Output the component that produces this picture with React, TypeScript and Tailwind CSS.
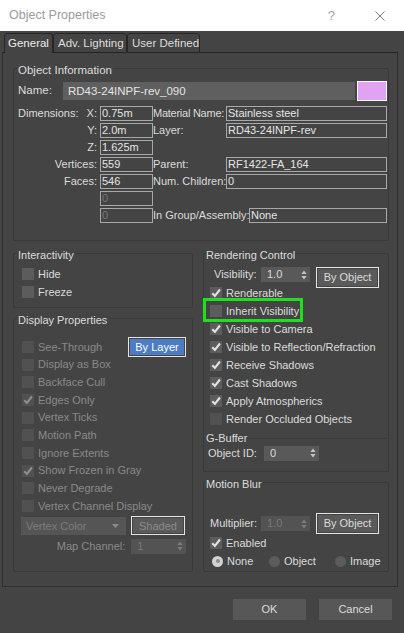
import React from 'react';

/* ── Small controls ─────────────────────────────── */

function Tick({ disabled }: { disabled?: boolean }) {
  return (
    <svg viewBox="0 0 12 12" className="w-[12px] h-[12px]">
      <path
        d="M2.3 6.2 L4.9 8.9 L9.9 2.5"
        fill="none"
        strokeWidth="2.1"
        className={disabled ? 'stroke-[#8e8e8e]' : 'stroke-[#e2e2e2]'}
      />
    </svg>
  );
}

function Check({
  label,
  checked,
  disabled,
  dark,
}: {
  label: string;
  checked?: boolean;
  disabled?: boolean;
  dark?: boolean;
}) {
  return (
    <div className="h-[18px] flex items-center gap-[4px]">
      <span
        className={`w-[12px] h-[12px] shrink-0 flex items-center justify-center ${
          disabled || dark ? 'bg-[#515151]' : 'bg-[#5c5c5c]'
        }`}
      >
        {checked && <Tick disabled={disabled} />}
      </span>
      <span className={disabled ? 'text-[#8a8a8a]' : 'text-[#dcdcdc]'}>{label}</span>
    </div>
  );
}

function Radio({ label, selected }: { label: string; selected?: boolean }) {
  return (
    <div className="h-[18px] flex items-center gap-[4px]">
      <span
        className={`w-[11px] h-[11px] ml-[2px] rounded-full flex items-center justify-center ${
          selected ? 'bg-[#d2d2d2]' : 'bg-[#5c5c5c]'
        }`}
      >
        {selected && <span className="w-[4px] h-[4px] rounded-full bg-[#8f8f8f]" />}
      </span>
      <span>{label}</span>
    </div>
  );
}

function Box({
  value,
  disabled,
  className = '',
}: {
  value: string;
  disabled?: boolean;
  className?: string;
}) {
  return (
    <div
      className={`h-[15px] border border-[#a8a8a8] pl-[1px] leading-[13px] overflow-hidden ${
        disabled ? 'text-[#767676]' : 'text-[#e4e4e4]'
      } ${className}`}
    >
      {value}
    </div>
  );
}

function Spinner({
  value,
  disabled,
  className = '',
}: {
  value: string;
  disabled?: boolean;
  className?: string;
}) {
  return (
    <div
      className={`h-[15px] flex items-center pl-[6px] pr-[3px] leading-[15px] ${
        disabled ? 'bg-[#535353] text-[#7a7a7a]' : 'bg-[#595959] text-[#dcdcdc]'
      } ${className}`}
    >
      <span className="flex-1">{value}</span>
      <svg viewBox="0 0 6 10" className="w-[6px] h-[10px]">
        <path
          d="M3 0.6 L5.6 4 H0.4 Z M3 9.4 L5.6 6 H0.4 Z"
          className={disabled ? 'fill-[#7e7e7e]' : 'fill-[#c4c4c4]'}
        />
      </svg>
    </div>
  );
}

function Button({
  label,
  blue,
  disabled,
  className = '',
}: {
  label: string;
  blue?: boolean;
  disabled?: boolean;
  className?: string;
}) {
  return (
    <div className={`border border-[#e4e4e4] p-[1px] shrink-0 ${className}`}>
      <div
        className={`h-full flex items-center justify-center ${
          blue ? 'bg-[#4b7cc4] text-white' : 'bg-[#5a5a5a]'
        } ${disabled ? 'text-[#8a8a8a]' : blue ? '' : 'text-[#dcdcdc]'}`}
      >
        {label}
      </div>
    </div>
  );
}

function Group({
  title,
  className = '',
  children,
}: {
  title: string;
  className?: string;
  children: React.ReactNode;
}) {
  return (
    <fieldset className={`border border-[#393939] rounded-[2px] min-w-0 ${className}`}>
      <legend className="leading-[14px] px-[1px] -ml-[1px] text-[#dcdcdc]">
        <span className="relative top-[2px]">{title}</span>
      </legend>
      {children}
    </fieldset>
  );
}

/* ── Dialog ─────────────────────────────────────── */

export default function App() {
  return (
    <div className="w-[404px] h-[633px] bg-[#444444] flex flex-col overflow-hidden whitespace-nowrap font-['Liberation_Sans','Arial',sans-serif] text-[11px] text-[#dcdcdc]">
      {/* ── Title bar ──────────────────────────── */}
      <div className="h-[31px] shrink-0 bg-white flex items-center pl-[9px] pr-[19px]">
        <span className="flex-1 text-[12.5px] text-[#9b9b9b]">Object Properties</span>
        <span className="text-[13px] text-[#a3a3a3] mr-[40px]">?</span>
        <svg viewBox="0 0 10 10" className="w-[10px] h-[10px]">
          <path d="M0.5 0.5 L9.5 9.5 M9.5 0.5 L0.5 9.5" stroke="#7c7c7c" strokeWidth="1" />
        </svg>
      </div>

      {/* ── Tabs ───────────────────────────────── */}
      <div className="ml-[2px] w-[396px] mt-[2px] h-[20px] flex items-stretch text-[11.5px]">
        <div className="w-[2px] border-b border-[#262626]" />
        <div className="w-[49px] border-x border-t border-[#262626] rounded-t-[3px] pl-[3px] leading-[19px] text-[#ececec]">
          General
        </div>
        <div className="w-[74px] border-x border-t border-b border-[#262626] rounded-t-[3px] pl-[4px] leading-[18px]">
          Adv. Lighting
        </div>
        <div className="w-[73px] border-x border-t border-b border-[#262626] rounded-t-[3px] pl-[4px] leading-[18px]">
          User Defined
        </div>
        <div className="flex-1 border-b border-[#262626]" />
      </div>

      {/* ── Tab page ───────────────────────────── */}
      <div className="ml-[2px] w-[396px] h-[534px] border-x border-b border-[#2f2f2f] pl-[10px] pt-[8px]">
        {/* Object Information */}
        <Group title="Object Information" className="w-[376px] pl-[4px] pr-[1px] pb-[17px] text-[11.5px]">
          <div className="mt-[6px] h-[20px] flex items-center">
            <span className="w-[45px]">Name:</span>
            <div className="w-[292px] h-[18px] bg-[#5f5f5f] pl-[5px] leading-[18px] text-[#e4e4e4]">
              RD43-24INPF-rev_090
            </div>
            <div className="ml-[2px] w-[30px] h-[20px] border border-white bg-[#e1a2f1]" />
          </div>

          <div className="mt-[5px] flex flex-col gap-[2px] leading-[15px] text-[11px]">
            <div className="h-[15px] flex">
              <div className="w-[82px] pr-[3px] flex justify-between">
                <span>Dimensions:</span>
                <span>X:</span>
              </div>
              <Box value="0.75m" className="w-[53px]" />
              <span className="w-[73px] tracking-[-0.25px]">Material Name:</span>
              <Box value="Stainless steel" className="flex-1" />
            </div>
            <div className="h-[15px] flex">
              <span className="w-[82px] pr-[3px] text-right">Y:</span>
              <Box value="2.0m" className="w-[53px]" />
              <span className="w-[73px]">Layer:</span>
              <Box value="RD43-24INPF-rev" className="flex-1" />
            </div>
            <div className="h-[15px] flex">
              <span className="w-[82px] pr-[3px] text-right">Z:</span>
              <Box value="1.625m" className="w-[53px]" />
            </div>
            <div className="h-[15px] flex">
              <span className="w-[82px] pr-[3px] text-right">Vertices:</span>
              <Box value="559" className="w-[53px]" />
              <span className="w-[73px]">Parent:</span>
              <Box value="RF1422-FA_164" className="flex-1" />
            </div>
            <div className="h-[15px] flex">
              <span className="w-[82px] pr-[3px] text-right">Faces:</span>
              <Box value="546" className="w-[53px]" />
              <span className="w-[73px]">Num. Children:</span>
              <Box value="0" className="flex-1" />
            </div>
            <div className="h-[15px] flex">
              <span className="w-[82px]" />
              <Box value="0" disabled className="w-[53px]" />
            </div>
            <div className="h-[15px] flex">
              <span className="w-[82px]" />
              <Box value="0" disabled className="w-[53px]" />
              <span className="w-[96px]">In Group/Assembly:</span>
              <Box value="None" className="flex-1" />
            </div>
          </div>
        </Group>

        {/* Two columns */}
        <div className="mt-[5px] flex gap-[10px]">
          {/* Left column */}
          <div className="w-[180px] flex flex-col">
            <Group title="Interactivity" className="pl-[4px] pb-[6px]">
              <div className="mt-[5px] pl-[4px]">
                <Check label="Hide" />
                <Check label="Freeze" />
              </div>
            </Group>

            <Group title="Display Properties" className="mt-[3px] pl-[4px] pr-[6px] pb-[17px]">
              <div className="mt-[13px] pl-[4px]">
                <div className="h-[17.7px] flex items-center">
                  <Check label="See-Through" disabled />
                  <Button label="By Layer" blue className="ml-auto w-[58px] h-[20px]" />
                </div>
                {[
                  ['Display as Box', false],
                  ['Backface Cull', false],
                  ['Edges Only', true],
                  ['Vertex Ticks', false],
                  ['Motion Path', false],
                  ['Ignore Extents', false],
                  ['Show Frozen in Gray', true],
                  ['Never Degrade', false],
                  ['Vertex Channel Display', false],
                ].map(([label, checked]) => (
                  <div key={label as string} className="h-[17.7px] flex items-center">
                    <Check label={label as string} checked={checked as boolean} disabled />
                  </div>
                ))}
                <div className="mt-[1px] h-[20px] flex items-center -ml-[1px]">
                  <div className="w-[105px] h-[18px] bg-[#555555] flex items-center pl-[5px] pr-[7px] text-[#7c7c7c]">
                    <span className="flex-1">Vertex Color</span>
                    <svg viewBox="0 0 7 4" className="w-[7px] h-[4px]">
                      <path d="M0 0 H7 L3.5 4 Z" className="fill-[#8a8a8a]" />
                    </svg>
                  </div>
                  <Button label="Shaded" disabled className="ml-[5px] w-[54px] h-[19px]" />
                </div>
                <div className="mt-[3px] h-[15px] flex items-center -ml-[1px]">
                  <span className="w-[105px] text-right text-[#8a8a8a]">Map Channel:</span>
                  <Spinner value="1" disabled className="ml-[6px] w-[55px]" />
                </div>
              </div>
            </Group>
          </div>

          {/* Right column */}
          <div className="w-[186px] flex flex-col">
            <Group title="Rendering Control" className="pl-[2px] pr-[2px] pb-[10px]">
              <div className="pl-[4px]">
                <div className="mt-[5px] h-[19px] flex items-start">
                  <span className="ml-[4px] w-[47px] leading-[19px]">Visibility:</span>
                  <Spinner value="1.0" className="mt-[2px] w-[49px]" />
                  <Button label="By Object" className="ml-[6px] mt-[2px] w-[63px] h-[21px]" />
                </div>
                <Check label="Renderable" checked />
                <div className="relative">
                  <Check label="Inherit Visibility" />
                  <div className="absolute -left-[7px] -top-[4px] w-[100px] h-[24px] border-[3px] border-[#1fe01f] pointer-events-none" />
                </div>
                <Check label="Visible to Camera" checked />
                <Check label="Visible to Reflection/Refraction" checked />
                <Check label="Receive Shadows" checked />
                <Check label="Cast Shadows" checked />
                <Check label="Apply Atmospherics" checked />
                <Check label="Render Occluded Objects" dark />
              </div>

              <fieldset className="mt-[3px] border-0 border-t border-[#393939] min-w-0">
                <legend className="leading-[14px] pr-[1px]">G-Buffer</legend>
                <div className="h-[16px] flex items-center pl-[2px]">
                  <span className="w-[56px]">Object ID:</span>
                  <Spinner value="0" className="w-[55px]" />
                </div>
              </fieldset>
            </Group>

            <Group title="Motion Blur" className="mt-[3px] pl-[2px] pr-[2px] pb-[1px]">
              <div className="pl-[4px]">
                <div className="mt-[24px] h-[21px] flex items-center">
                  <span className="w-[51px]">Multiplier:</span>
                  <Spinner value="1.0" disabled className="w-[49px]" />
                  <Button label="By Object" className="ml-[6px] w-[63px] h-[21px]" />
                </div>
                <Check label="Enabled" checked />
                <div className="flex">
                  <div className="w-[57px]">
                    <Radio label="None" selected />
                  </div>
                  <div className="w-[66px]">
                    <Radio label="Object" />
                  </div>
                  <Radio label="Image" />
                </div>
              </div>
            </Group>
          </div>
        </div>
      </div>

      {/* ── Footer buttons ─────────────────────── */}
      <div className="mt-[12px] h-[21px] flex justify-end gap-[13px] pr-[12px]">
        <div className="w-[73px] h-[21px] bg-[#575757] flex items-center justify-center">OK</div>
        <div className="w-[73px] h-[21px] bg-[#575757] flex items-center justify-center">Cancel</div>
      </div>
    </div>
  );
}
